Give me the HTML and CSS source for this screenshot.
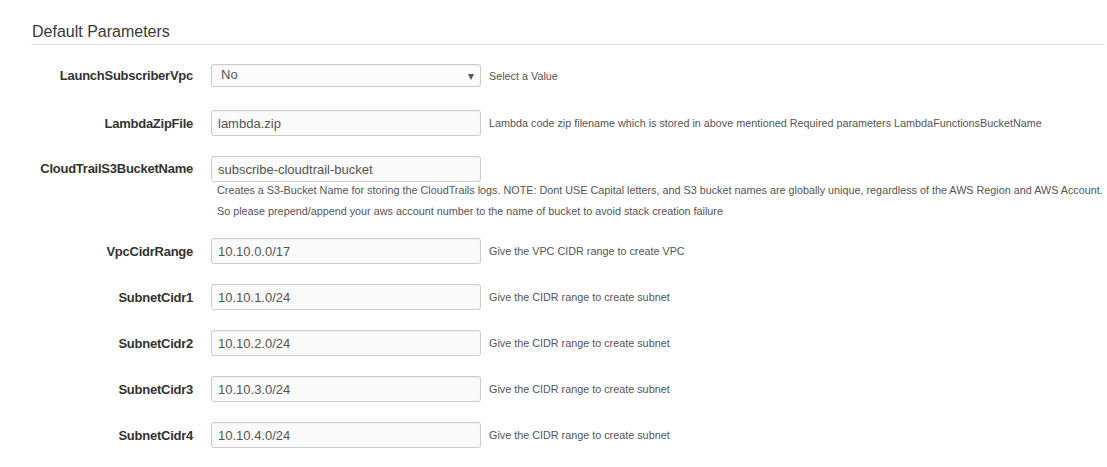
FILE: index.html
```html
<!DOCTYPE html>
<html lang="en">
<head>
<meta charset="utf-8">
<title>Default Parameters</title>
<link rel="stylesheet" href="styles.css">
</head>
<body>
<div class="page">
  <h2 class="section-title">Default Parameters</h2>
  <div class="form">
    <div class="row row-select">
      <label class="label">LaunchSubscriberVpc</label>
      <div class="select">
        <span class="select-value">No</span>
        <span class="select-arrow"></span>
      </div>
      <span class="help">Select a Value</span>
    </div>
    <div class="row">
      <label class="label">LambdaZipFile</label>
      <input class="input" type="text" value="lambda.zip">
      <span class="help">Lambda code zip filename which is stored in above mentioned Required parameters LambdaFunctionsBucketName</span>
    </div>
    <div class="row row-block">
      <label class="label">CloudTrailS3BucketName</label>
      <div class="stack">
        <input class="input" type="text" value="subscribe-cloudtrail-bucket">
        <p class="help-block">Creates a S3-Bucket Name for storing the CloudTrails logs. NOTE: Dont USE Capital letters, and S3 bucket names are globally unique, regardless of the AWS Region and AWS Account.<br>So please prepend/append your aws account number to the name of bucket to avoid stack creation failure</p>
      </div>
    </div>
    <div class="row">
      <label class="label">VpcCidrRange</label>
      <input class="input" type="text" value="10.10.0.0/17">
      <span class="help">Give the VPC CIDR range to create VPC</span>
    </div>
    <div class="row">
      <label class="label">SubnetCidr1</label>
      <input class="input" type="text" value="10.10.1.0/24">
      <span class="help">Give the CIDR range to create subnet</span>
    </div>
    <div class="row">
      <label class="label">SubnetCidr2</label>
      <input class="input" type="text" value="10.10.2.0/24">
      <span class="help">Give the CIDR range to create subnet</span>
    </div>
    <div class="row">
      <label class="label">SubnetCidr3</label>
      <input class="input" type="text" value="10.10.3.0/24">
      <span class="help">Give the CIDR range to create subnet</span>
    </div>
    <div class="row">
      <label class="label">SubnetCidr4</label>
      <input class="input" type="text" value="10.10.4.0/24">
      <span class="help">Give the CIDR range to create subnet</span>
    </div>
  </div>
</div>
</body>
</html>
```
FILE: styles.css
```css
html, body {
  margin: 0;
  padding: 0;
  background: #ffffff;
}

body {
  font-family: "Liberation Sans", Arial, sans-serif;
  color: #333333;
  width: 1107px;
  height: 467px;
  overflow: hidden;
}

.page {
  padding: 22px 2px 0 0;
}

.section-title {
  margin: 0 0 0 31px;
  padding: 0 0 2px 1px;
  font-size: 16px;
  line-height: 20px;
  font-weight: normal;
  color: #3a3a3a;
  border-bottom: 1px solid #e3e3e3;
}

.form {
  display: flex;
  flex-direction: column;
  padding-top: 19px;
}

.row {
  display: grid;
  grid-template-columns: 193px 270px auto;
  column-gap: 18px;
  align-items: center;
  margin-bottom: 20px;
}

.row > .help {
  margin-left: -10px;
}

.row-select {
  margin-bottom: 23px;
}

.row-block {
  align-items: start;
  margin-bottom: 16px;
}

.row-block .label {
  line-height: 26px;
}

.label {
  text-align: right;
  font-size: 13px;
  font-weight: bold;
  letter-spacing: -0.25px;
  color: #333333;
}

.input,
.select {
  box-sizing: border-box;
  width: 270px;
  height: 26px;
  margin: 0;
  border: 1px solid #cccccc;
  border-radius: 3px;
  background: #fafafa;
  box-shadow: inset 0 1px 1px rgba(0, 0, 0, 0.04);
  font-family: "Liberation Sans", Arial, sans-serif;
  font-size: 13px;
  color: #555555;
  padding: 0 6px;
  outline: none;
}

.select {
  position: relative;
  height: 23px;
  display: flex;
  align-items: center;
  padding: 0 9px;
  background: #fbfbfb;
}

.select-value {
  line-height: 20px;
  margin-top: -2px;
}

.select-arrow {
  position: absolute;
  right: 6px;
  top: 9px;
  width: 0;
  height: 0;
  border-left: 3px solid transparent;
  border-right: 3px solid transparent;
  border-top: 6px solid #555555;
}

.help {
  font-size: 10.8px;
  color: #555555;
  white-space: nowrap;
}

.stack {
  grid-column: 2 / span 2;
  display: flex;
  flex-direction: column;
}

.help-block {
  margin: -2px 0 0 0;
  padding: 0 0 0 6px;
  font-size: 10.8px;
  line-height: 21px;
  color: #555555;
  white-space: nowrap;
}
```
